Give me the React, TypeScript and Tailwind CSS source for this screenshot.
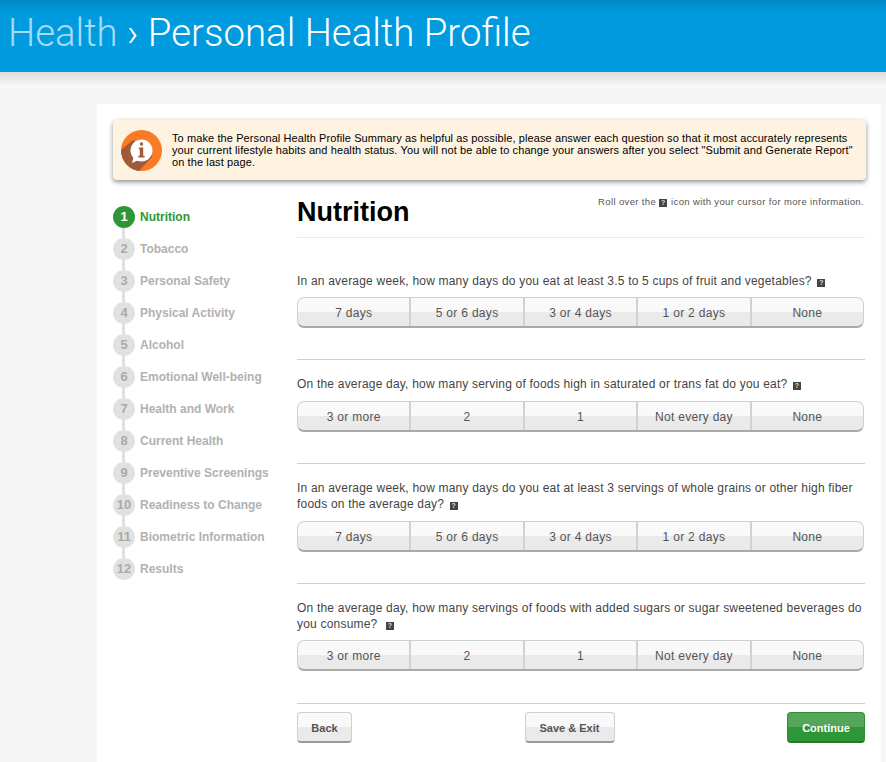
const steps = [
    "Nutrition",
    "Tobacco",
    "Personal Safety",
    "Physical Activity",
    "Alcohol",
    "Emotional Well-being",
    "Health and Work",
    "Current Health",
    "Preventive Screenings",
    "Readiness to Change",
    "Biometric Information",
    "Results",
];

const dayOptions = ["7 days", "5 or 6 days", "3 or 4 days", "1 or 2 days", "None"];
const servingOptions = ["3 or more", "2", "1", "Not every day", "None"];

const questions = [
    {
        text: "In an average week, how many days do you eat at least 3.5 to 5 cups of fruit and vegetables?",
        options: dayOptions,
        spacing: "pt-[35px] mb-[8px]",
        iconGap: "ml-[2px]",
        bottom: "pb-[31px]",
    },
    {
        text: "On the average day, how many serving of foods high in saturated or trans fat do you eat?",
        options: servingOptions,
        spacing: "pt-[16px] mb-[9px]",
        iconGap: "ml-[2px]",
        bottom: "pb-[31px]",
    },
    {
        text: "In an average week, how many days do you eat at least 3 servings of whole grains or other high fiber foods on the average day?",
        options: dayOptions,
        spacing: "pt-[16px] mb-[9px]",
        iconGap: "ml-[2px]",
        bottom: "pb-[31px]",
    },
    {
        text: "On the average day, how many servings of foods with added sugars or sugar sweetened beverages do you consume?",
        options: servingOptions,
        spacing: "pt-[16px] mb-[8px]",
        iconGap: "ml-[5px]",
        bottom: "pb-[32px]",
    },
];

function HelpIcon({ className = "" }: { className?: string }) {
    return (
        <span className={`mr-[1px] inline-flex h-[8px] w-[8px] items-center justify-center bg-[#444] align-[0px] text-[7px] leading-none font-bold tracking-normal text-[#ddd] ${className}`}>
            ?
        </span>
    );
}

function InfoBadge() {
    return (
        <svg width="41" height="41" viewBox="0 0 41 41" className="shrink-0">
            <defs>
                <clipPath id="badge">
                    <circle cx="20.5" cy="20.5" r="20.5" />
                </clipPath>
            </defs>
            <circle cx="20.5" cy="20.5" r="20.5" fill="#f97b25" />
            <path d="M0 20 L12 10 L31 24 L31 27 L16 43 L0 43 Z" fill="#a05a3a" clipPath="url(#badge)" />
            <path d="M20.5 9.5 a11 11 0 0 1 0 22 a12 12 0 0 1 -4.5 -.8 l-5 2.4 l1.4 -5.2 a11 11 0 0 1 8.1 -18.4 Z" fill="#fff" />
            <circle cx="20.5" cy="14" r="1.7" fill="#a05a3a" />
            <path d="M18.3 17.5 h3.9 v8.2 h1.4 v1.8 h-6.2 v-1.8 h1.4 v-6.4 h-1.4 Z" fill="#a05a3a" />
        </svg>
    );
}

function Segmented({ options }: { options: string[] }) {
    return (
        <div className="mr-[1px] flex h-[31px] overflow-hidden rounded-[7px] border border-b-2 border-[#cfcfcf] border-b-[#a9a9a9] bg-[linear-gradient(#f9f9f9_0,#f9f9f9_50%,#eaeaea_50%,#eaeaea_100%)]">
            {options.map((opt, i) => (
                <div
                    key={opt}
                    className={`flex flex-1 items-center justify-center pt-[2px] text-[12px] tracking-[0.3px] text-[#555] ${i > 0 ? "border-l-2 border-[#d2d2d2]" : ""}`}
                >
                    {opt}
                </div>
            ))}
        </div>
    );
}

function ActionButton({ label, width, green }: { label: string; width: string; green?: boolean }) {
    return (
        <div
            className={`flex h-[31px] items-center justify-center rounded-[4px] border border-b-2 pt-[2px] text-[11px] font-bold ${width} ${
                green
                    ? "border-[#2f8f37] border-b-[#27762e] bg-[linear-gradient(#55a55b_0,#55a55b_50%,#2f9638_50%,#2f9638_100%)] text-white"
                    : "border-[#d0d0d0] border-b-[#9a9a9a] bg-[linear-gradient(#f9f9f9_0,#f9f9f9_50%,#eaeaea_50%,#eaeaea_100%)] text-[#555]"
            }`}
        >
            {label}
        </div>
    );
}

export default function App() {
    return (
        <div className="flex h-[762px] flex-col overflow-hidden bg-white font-['Liberation_Sans',Arial,sans-serif]">
            <header className="h-[72px] shrink-0 bg-[linear-gradient(#0088c6_0,#009bdf_14px,#009bdf_100%)] pl-[8px] font-['Roboto',sans-serif] text-[38.4px] leading-[66px] font-light text-white">
                <span className="text-[#a5dcf5]">Health</span> › Personal Health Profile
            </header>
            <div className="h-[16px] shrink-0 bg-[linear-gradient(#dcdcdc,#fafafa)]" />

            <div className="flex-1 bg-[#f5f5f5] pt-[16px] pr-[5px] pl-[97px]">
                <div className="h-full bg-white pt-[16px] pl-[16px]">
                    <div className="flex h-[60px] w-[753px] items-center gap-[10px] rounded-[4px] bg-[#fdf3e0] pl-[8px] text-[11px] leading-[12px] tracking-[0.1px] text-black shadow-[0_2px_5px_rgba(0,0,0,0.45)]">
                        <InfoBadge />
                        <p className="w-[690px]">
                            To make the Personal Health Profile Summary as helpful as possible, please answer each question so that it most accurately represents your current lifestyle habits and health status. You will not be able to change your answers after you select "Submit and Generate Report" on the last page.
                        </p>
                    </div>

                    <div className="mt-[15px] flex">
                        <nav className="mt-[11px] w-[184px] shrink-0">
                            {steps.map((step, i) => (
                                <div key={step} className="relative flex h-[32px] items-start gap-[5px]">
                                    {i < steps.length - 1 && (
                                        <span className="absolute top-[20px] left-[9px] h-[12px] w-[3px] bg-[#e1e1e1]" />
                                    )}
                                    <span
                                        className={`relative flex h-[22px] w-[22px] items-center justify-center rounded-full text-[13px] font-bold ${
                                            i === 0 ? "bg-[#2f9638] text-white" : "bg-[#e1e1e1] text-[#aaa]"
                                        }`}
                                    >
                                        {i + 1}
                                    </span>
                                    <span className={`text-[12px] leading-[22px] font-bold ${i === 0 ? "text-[#2f9638]" : "text-[#b1b1b1]"}`}>
                                        {step}
                                    </span>
                                </div>
                            ))}
                        </nav>

                        <main className="w-[568px]">
                            <div className="flex h-[43px] items-start justify-between border-b border-[#e8e8e8] pr-[1px]">
                                <h1 className="text-[27px] leading-[35px] font-bold text-black">Nutrition</h1>
                                <p className="mt-[1px] text-[9.5px] leading-[12px] tracking-[0.36px] text-[#555]">
                                    Roll over the <HelpIcon /> icon with your cursor for more information.
                                </p>
                            </div>

                            {questions.map((q) => (
                                <section key={q.text} className={`border-b border-[#cfcfcf] ${q.bottom}`}>
                                    <p className={`text-[12px] leading-[16px] tracking-[0.2px] text-[#444] ${q.spacing}`}>
                                        {q.text} <HelpIcon className={q.iconGap} />
                                    </p>
                                    <Segmented options={q.options} />
                                </section>
                            ))}

                            <div className="mt-[8px] flex justify-between">
                                <ActionButton label="Back" width="w-[55px]" />
                                <ActionButton label="Save & Exit" width="w-[90px]" />
                                <ActionButton label="Continue" width="w-[78px]" green />
                            </div>
                        </main>
                    </div>
                </div>
            </div>
        </div>
    );
}
